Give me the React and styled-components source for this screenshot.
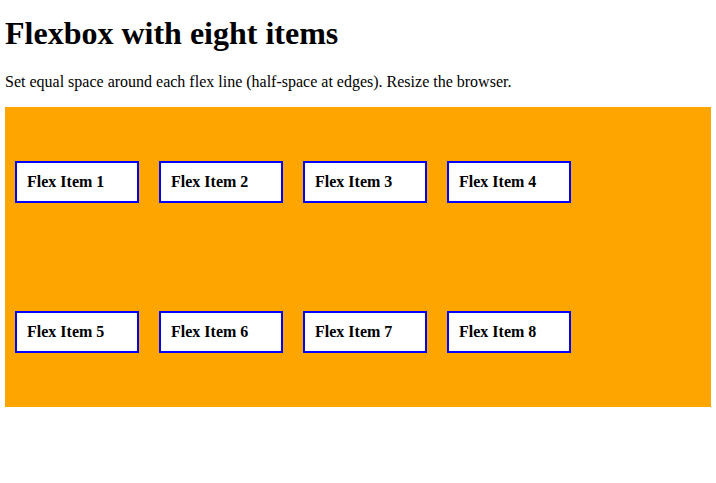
import styled, { createGlobalStyle } from "styled-components";

const GlobalStyle = createGlobalStyle`
  body {
    margin: 5px;
    font-family: "Liberation Serif", "Times New Roman", serif;
    background: #ffffff;
    color: #000000;
  }
`;

const Title = styled.h1`
  font-size: 32px;
  font-weight: bold;
  margin: 0 0 21px;
  padding-top: 10px;
`;

const Intro = styled.p`
  font-size: 16px;
  margin: 0 0 16px;
`;

const FlexContainer = styled.div`
  display: flex;
  flex-wrap: wrap;
  align-content: space-around;
  height: 300px;
  background-color: orange;
`;

const FlexItem = styled.div`
  width: 100px;
  margin: 10px;
  padding: 10px;
  border: 2px solid blue;
  background: #ffffff;
  font-weight: bold;
  font-size: 16px;
`;

const App = () => {
  const items = [1, 2, 3, 4, 5, 6, 7, 8];

  return (
    <>
      <GlobalStyle />
      <Title>Flexbox with eight items</Title>
      <Intro>
        Set equal space around each flex line (half-space at edges). Resize the
        browser.
      </Intro>
      <FlexContainer>
        {items.map(n => (
          <FlexItem key={n}>Flex Item {n}</FlexItem>
        ))}
      </FlexContainer>
    </>
  );
};

export default App;
